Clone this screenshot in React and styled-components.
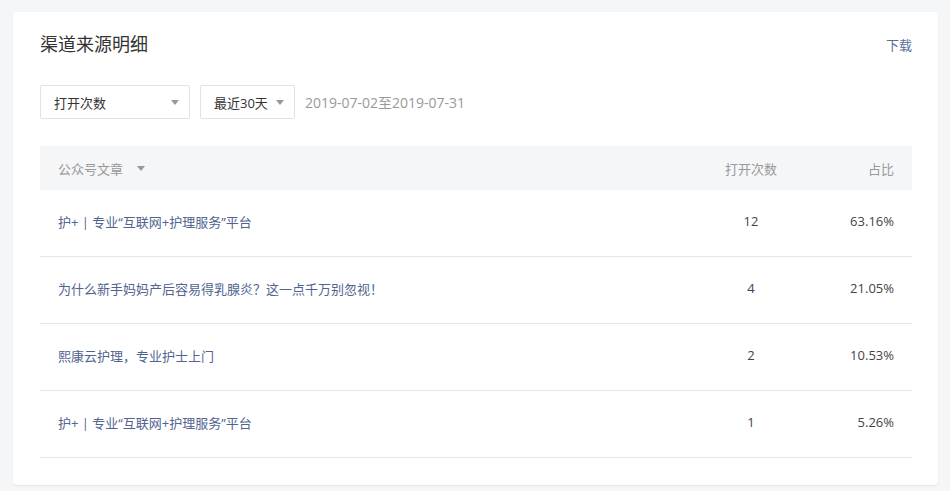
import React from "react";
import styled, { createGlobalStyle } from "styled-components";

const GlobalStyle = createGlobalStyle`
  html, body {
    margin: 0;
    padding: 0;
    background: #f5f6f8;
    font-family: "Open Sans", "Noto Sans CJK SC", sans-serif;
  }
  * { box-sizing: border-box; }
`;

const rows = [
  { title: "护+ | 专业“互联网+护理服务”平台", count: 12, ratio: "63.16%" },
  { title: "为什么新手妈妈产后容易得乳腺炎？这一点千万别忽视！", count: 4, ratio: "21.05%" },
  { title: "熙康云护理，专业护士上门", count: 2, ratio: "10.53%" },
  { title: "护+ | 专业“互联网+护理服务”平台", count: 1, ratio: "5.26%" },
];

const Caret = () => (
  <svg width="8" height="5" viewBox="0 0 8 5">
    <path d="M0 0h8L4 5z" fill="#999" />
  </svg>
);

const App = () => (
  <Page>
    <GlobalStyle />
    <Card>
      <Header>
        <Title>渠道来源明细</Title>
        <Download>下载</Download>
      </Header>
      <Filters>
        <Select width={150}>
          <span>打开次数</span>
          <Caret />
        </Select>
        <Select width={95}>
          <span>最近30天</span>
          <Caret />
        </Select>
        <DateRange>2019-07-02至2019-07-31</DateRange>
      </Filters>
      <Table>
        <HeadRow>
          <HeadCell>
            公众号文章
            <Caret />
          </HeadCell>
          <HeadCell align="center">打开次数</HeadCell>
          <HeadCell align="right">占比</HeadCell>
        </HeadRow>
        {rows.map((r, i) => (
          <Row key={i}>
            <LinkCell>{r.title}</LinkCell>
            <Cell align="center">{r.count}</Cell>
            <Cell align="right">{r.ratio}</Cell>
          </Row>
        ))}
      </Table>
    </Card>
  </Page>
);

const Page = styled.div`
  padding: 12px 12px 6px 13px;
`;

const Card = styled.div`
  background: #fff;
  border-radius: 4px;
  box-shadow: 0 1px 2px rgba(0, 0, 0, 0.08);
  padding: 20px 26px 27px 27px;
  width: 925px;
`;

const Header = styled.div`
  display: flex;
  justify-content: space-between;
  align-items: center;
  height: 24px;
`;

const Title = styled.div`
  font-size: 18px;
  color: #333;
  line-height: 24px;
`;

const Download = styled.a`
  font-size: 13px;
  color: #5a6d99;
  cursor: pointer;
`;

const Filters = styled.div`
  display: flex;
  align-items: center;
  gap: 10px;
  margin-top: 29px;
`;

const Select = styled.div`
  width: ${(p) => p.width}px;
  height: 34px;
  border: 1px solid #e2e2e2;
  border-radius: 2px;
  display: flex;
  align-items: center;
  justify-content: space-between;
  padding: 0 10px 0 13px;
  font-size: 13px;
  color: #333;
`;

const DateRange = styled.div`
  font-size: 14px;
  color: #999;
`;

const Table = styled.div`
  margin-top: 27px;
`;

const grid = `
  display: grid;
  grid-template-columns: 1fr 86px 100px;
  align-items: center;
  padding: 0 18px;
`;

const HeadRow = styled.div`
  ${grid}
  height: 44px;
  background: #f5f6f8;
  font-size: 13px;
  color: #999;
`;

const HeadCell = styled.div`
  text-align: ${(p) => p.align || "left"};
  display: ${(p) => (p.align ? "block" : "flex")};
  align-items: center;
  gap: 14px;
`;

const Row = styled.div`
  ${grid}
  height: 67px;
  border-bottom: 1px solid #e6e6e6;
  font-size: 13px;
  padding-bottom: 4px;
`;

const LinkCell = styled.div`
  color: #51648f;
`;

const Cell = styled.div`
  text-align: ${(p) => p.align || "left"};
  color: #444;
`;

export default App;
